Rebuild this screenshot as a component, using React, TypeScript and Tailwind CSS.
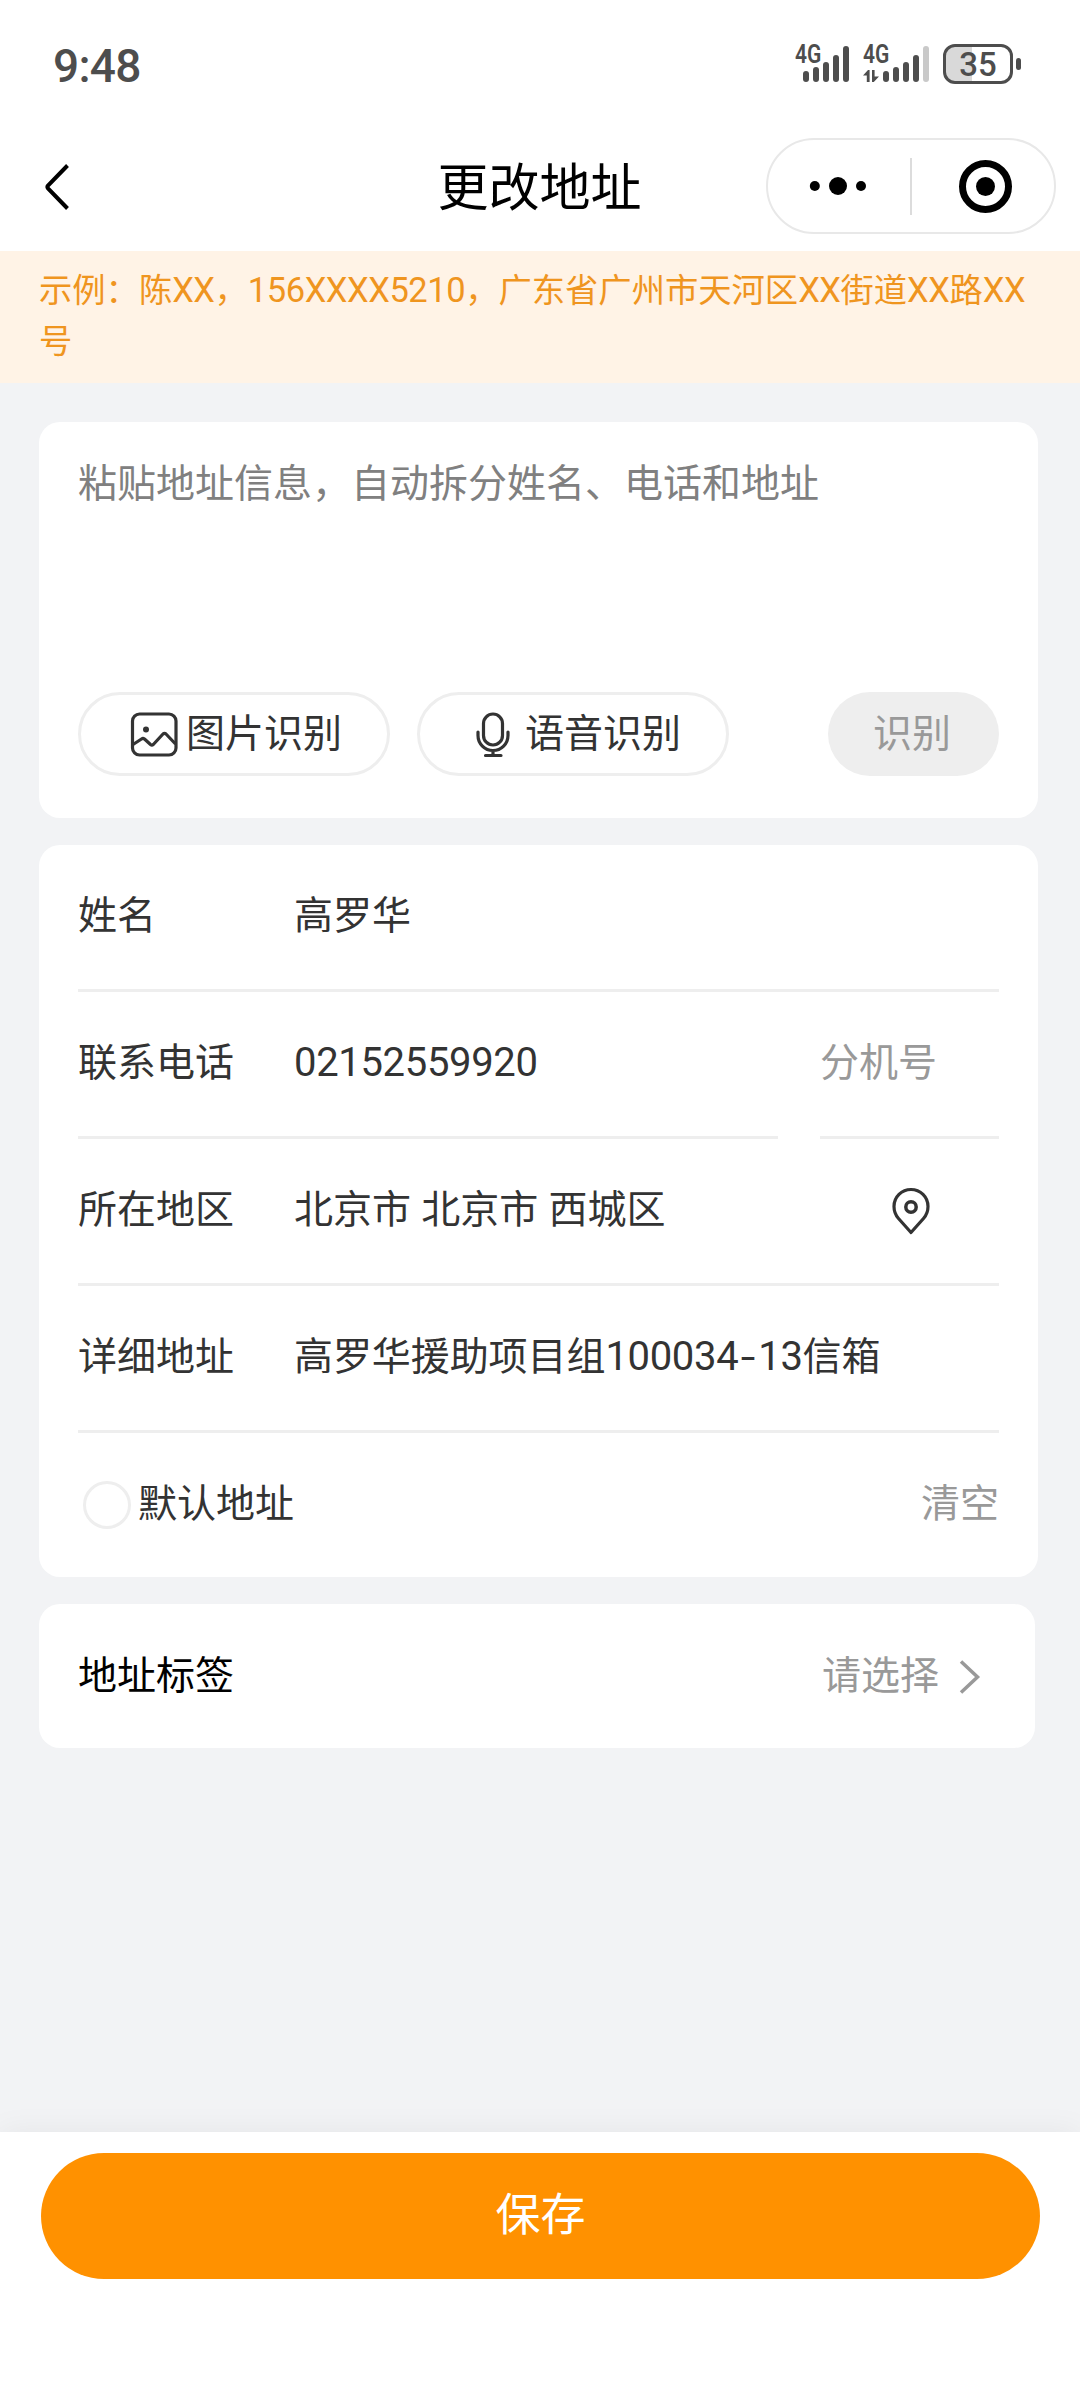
import React from "react";

type Bar = { h: string; tone: string };

const fullSignal: Bar[] = [
  { h: "h-[11px]", tone: "bg-[#4d4d4d]" },
  { h: "h-[15px]", tone: "bg-[#4d4d4d]" },
  { h: "h-[20px]", tone: "bg-[#4d4d4d]" },
  { h: "h-[27px]", tone: "bg-[#4d4d4d]" },
  { h: "h-[36px]", tone: "bg-[#4d4d4d]" },
];

const weakSignal: Bar[] = [
  ...fullSignal.slice(0, 4),
  { h: "h-[36px]", tone: "bg-[#c9c9c9]" },
];

function Signal({ bars, width, data }: { bars: Bar[]; width: string; data?: boolean }) {
  return (
    <div className={`relative mt-[2px] mr-[14px] flex h-[36px] items-end justify-end gap-1 ${width}`}>
      <span className="absolute -top-[4px] left-0 origin-left scale-x-[0.84] font-[Roboto] text-[25px] leading-[25px] font-semibold">
        4G
      </span>
      {data && (
        <svg className="absolute bottom-0 left-0" width="16" height="12" viewBox="0 0 16 12" fill="#4d4d4d">
          <path d="M0 5.500 5 0h1.600v12H3.800V5.500zM9 0h2.600v6.500H16L10.800 12H9z" />
        </svg>
      )}
      {bars.map((b, i) => (
        <i key={i} className={`w-[6px] rounded-full ${b.h} ${b.tone}`} />
      ))}
    </div>
  );
}

function StatusBar() {
  return (
    <div className="flex h-[128px] items-start justify-between pr-[59px] pl-[53px] text-[#4d4d4d]">
      <span className="mt-[42px] font-[Roboto] text-[46px] leading-[48px] font-medium tracking-[-0.700px]">9:48</span>
      <div className="flex pt-[44px]">
        <Signal bars={fullSignal} width="w-[54px]" />
        <Signal bars={weakSignal} width="w-[66px]" data />
        <div className="flex h-[40px] w-[70px] items-center justify-center rounded-[12px] border-[3px] border-[#4d4d4d] bg-[linear-gradient(to_right,#d9d9d9_26px,transparent_26px)]">
          <span className="mt-px font-[Roboto] text-[33px] leading-[34px] font-medium">35</span>
        </div>
        <div className="mt-[14px] ml-[3px] h-[12px] w-[5px] rounded-full bg-[#4d4d4d]" />
      </div>
    </div>
  );
}

function NavBar() {
  return (
    <header className="flex h-[123px] items-start justify-between pr-[24px] pl-[43px]">
      <svg className="mt-[35px] mr-[242px]" width="28" height="48" viewBox="0 0 28 48" fill="none" stroke="#000" strokeWidth="4">
        <path d="M24.500 2.500 5 22.500Q3.800 24 5 25.500L24.500 45.500" />
      </svg>
      <h1 className="mt-[23px] text-[51px] leading-[66px] text-black">更改地址</h1>
      <div className="mt-[10px] flex h-[96px] w-[290px] items-center rounded-full border-2 border-[#e8e8e8]">
        <svg width="142" height="92" viewBox="0 0 142 92">
          <circle cx="46.800" cy="46" r="5" />
          <circle cx="70" cy="46" r="9" />
          <circle cx="93" cy="46" r="5" />
        </svg>
        <div className="h-[57px] w-[2px] bg-[#dcdcdc]" />
        <svg width="142" height="92" viewBox="0 0 142 92">
          <circle cx="73.500" cy="46.500" r="23" fill="none" stroke="#000" strokeWidth="7" />
          <circle cx="73.500" cy="46.500" r="9.500" />
        </svg>
      </div>
    </header>
  );
}

function Latin({ children }: { children: string }) {
  return <span className="font-[Roboto] text-[34.500px] leading-none tracking-[-0.450px]">{children}</span>;
}

function Digits({ children }: { children: string }) {
  return <span className="mt-[3px] font-[Roboto] text-[40px] tracking-[-0.330px]">{children}</span>;
}

function Notice() {
  return (
    <div className="h-[132px] bg-[#fff3e6] pt-[11px] pl-[39px] text-[33.300px] leading-[51px] text-[#ef951f]">
      <p className="whitespace-nowrap">
        示例：陈<Latin>XX</Latin>，<Latin>156XXXX5210</Latin>，广东省广州市天河区<Latin>XX</Latin>街道<Latin>XX</Latin>路<Latin>XX</Latin>
        <br />号
      </p>
    </div>
  );
}

function PasteCard() {
  return (
    <section className="flex h-[396px] w-[999px] flex-col justify-between rounded-[21px] bg-white px-[39px] pt-[28px] pb-[42px]">
      <p className="text-[39px] leading-[60px] text-[#808080]">粘贴地址信息，自动拆分姓名、电话和地址</p>
      <div className="flex h-[84px] text-[39px] leading-[70px] text-[#333]">
        <button className="flex w-[312px] rounded-full border-[3px] border-[#eee] pl-[49px]">
          <svg className="mt-[16px] mr-[8px]" width="48" height="48" viewBox="0 0 48 48" fill="none" stroke="#333" strokeWidth="3.200" strokeLinejoin="round">
            <rect x="2.500" y="3" width="43.500" height="41" rx="7" />
            <path d="M3 33.500 11.500 28q1.500-1 3 0l6 5.500q1.400 1.100 2.800 0L33 23q1.500-1.300 3 0L45.500 33" />
            <circle cx="16" cy="18.500" r="3" fill="#333" stroke="none" />
          </svg>
          图片识别
        </button>
        <button className="ml-[27px] flex w-[312px] rounded-full border-[3px] border-[#eee] pl-[53px]">
          <svg className="mt-[15px] mr-[12px]" width="40" height="48" viewBox="0 0 40 48" fill="none" stroke="#333" strokeWidth="3.200" strokeLinecap="round">
            <rect x="10.500" y="4" width="19" height="31" rx="9.500" />
            <path d="M5 22v3.500a15 15 0 0 0 30 0V22M20 40.500v5M12.500 45.500h15.500" />
          </svg>
          语音识别
        </button>
        <button className="ml-auto w-[171px] rounded-full bg-[#eee] pr-[3px] pb-[8px] text-[#999]">识别</button>
      </div>
    </section>
  );
}

function Row({ label, children }: { label: string; children: React.ReactNode }) {
  return (
    <div className="flex h-[147px] border-b-[3px] border-[#eee]">
      <span className="w-[216px]">{label}</span>
      {children}
    </div>
  );
}

function FormCard() {
  return (
    <section className="mt-[27px] h-[732px] w-[999px] rounded-[21px] bg-white px-[39px] text-[39px] leading-[135px] text-[#333]">
      <Row label="姓名">
        <span>高罗华</span>
      </Row>
      <div className="flex gap-[42px]">
        <div className="flex-1">
          <Row label="联系电话">
            <Digits>02152559920</Digits>
          </Row>
        </div>
        <div className="h-[147px] w-[179px] border-b-[3px] border-[#eee] text-[#999]">分机号</div>
      </div>
      <Row label="所在地区">
        <span className="[word-spacing:1.500px]">北京市 北京市 西城区</span>
        <svg className="mt-[47px] mr-[68px] ml-auto" width="40" height="50" viewBox="0 0 40 50" fill="none" stroke="#333" strokeWidth="3.200" strokeLinejoin="round">
          <path d="M20 46.500 7.500 32.500C4 28.500 3 25 3 20.500a17 17 0 0 1 34 0c0 4.500-1 8-4.500 12z" />
          <circle cx="20" cy="21" r="5.200" strokeWidth="3.500" />
        </svg>
      </Row>
      <Row label="详细地址">
        <span className="flex tracking-[-0.080px]">
          高罗华援助项目组<Digits>100034</Digits>
          <span className="mt-[4px] w-[20px] scale-x-[1.350] text-center font-[Roboto]">-</span>
          <Digits>13</Digits>信箱
        </span>
      </Row>
      <div className="flex h-[144px] items-start">
        <span className="mt-[48px] mr-[7px] ml-[5px] size-[48px] rounded-full border-[3px] border-[#eee]" />
        <span>默认地址</span>
        <span className="ml-auto text-[#999]">清空</span>
      </div>
    </section>
  );
}

function TagCard() {
  return (
    <section className="mt-[27px] flex h-[144px] w-[996px] rounded-[21px] bg-white pr-[54px] pl-[39px] text-[39px] leading-[136px]">
      <span className="text-black">地址标签</span>
      <span className="ml-auto text-[#999]">请选择</span>
      <svg className="mt-[55px] ml-[20px]" width="22" height="36" viewBox="0 0 22 36" fill="none" stroke="#999" strokeWidth="3.500">
        <path d="M2 2.500 18.500 18 2 33.500" />
      </svg>
    </section>
  );
}

export default function App() {
  return (
    <div className="flex h-[2388px] w-[1080px] flex-col overflow-hidden bg-[#f2f3f5] font-['Noto_Sans_CJK_SC',sans-serif]">
      <div className="bg-white">
        <StatusBar />
        <NavBar />
      </div>
      <Notice />
      <main className="flex-1 pt-[39px] pl-[39px]">
        <PasteCard />
        <FormCard />
        <TagCard />
      </main>
      <footer className="h-[256px] bg-white px-[41px] pt-[21px] shadow-[0_0_30px_rgba(0,0,0,0.06)]">
        <button className="h-[126px] w-[999px] rounded-full bg-[#ff9100] pb-[8px] text-[45px] leading-[118px] text-white">
          保存
        </button>
      </footer>
    </div>
  );
}
